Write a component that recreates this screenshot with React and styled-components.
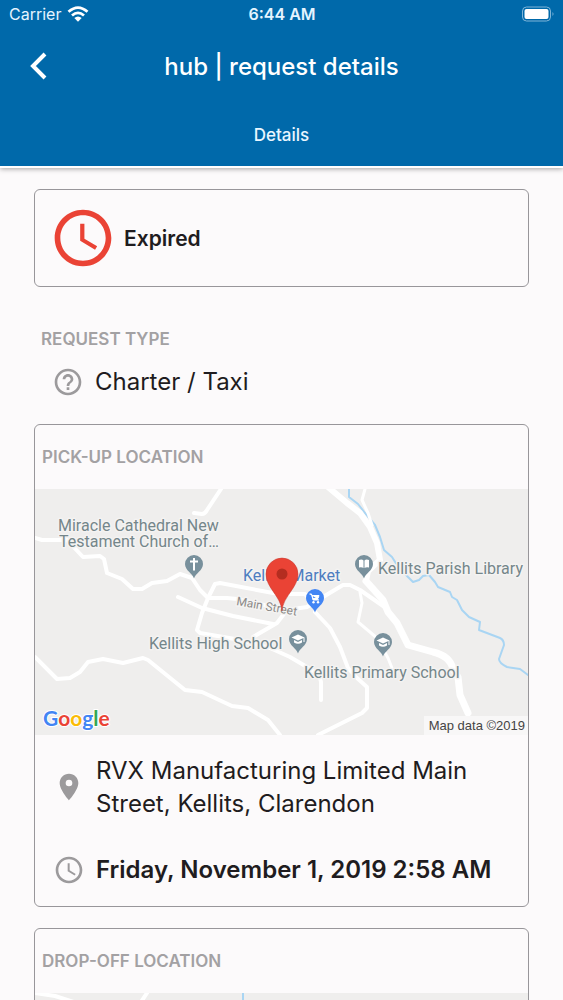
import styled, { createGlobalStyle } from 'styled-components';
import { MdAccessTime, MdHelpOutline, MdLocationOn } from 'react-icons/md';

const GlobalStyle = createGlobalStyle`
  * {
    box-sizing: border-box;
  }

  body {
    margin: 0;
    background: #fcfafb;
    color: #1f1c20;
    font-family: Inter, 'Liberation Sans', sans-serif;
  }
`;

const Screen = styled.div`
  display: flex;
  flex-direction: column;
  height: 100vh;
`;

const Header = styled.header`
  flex: none;
  background: #0069aa;
  color: #fff;
  border-bottom: 2px solid #fff;
  box-shadow: 0 1px 5px rgba(0, 0, 0, 0.35);
  z-index: 1;
`;

const StatusBar = styled.div`
  display: grid;
  grid-template-columns: 1fr auto 1fr;
  align-items: center;
  height: 28px;
  padding: 0 8px 0 9px;
  font-size: 16px;
  color: #e4f4ff;
`;

const Carrier = styled.span`
  display: flex;
  align-items: center;
  gap: 6px;
`;

const Time = styled.time`
  font-weight: 600;
`;

const Battery = styled.svg`
  justify-self: end;
`;

const TitleRow = styled.div`
  display: grid;
  grid-template-columns: 48px 1fr 48px;
  align-items: center;
  height: 76px;
  padding: 0 15px;
`;

const BackButton = styled.button`
  display: flex;
  align-items: center;
  justify-content: center;
  height: 48px;
  padding: 0;
  border: none;
  background: none;
  color: #fff;
  cursor: pointer;
`;

const Title = styled.h1`
  margin: 0;
  text-align: center;
  font-size: 24px;
  font-weight: 500;
`;

const Tabs = styled.nav`
  display: flex;
  height: 62px;
`;

const Tab = styled.button`
  flex: 1;
  border: none;
  background: none;
  color: #e9f6ff;
  font: inherit;
  font-size: 17px;
  font-weight: 500;
  cursor: pointer;
`;

const Content = styled.main`
  flex: 1;
  min-height: 0;
  padding: 21px 34px;
  overflow-y: auto;
  scrollbar-width: none;
`;

const Card = styled.section`
  margin-bottom: 21px;
  border: 1px solid #98969a;
  border-radius: 6px;
  overflow: hidden;
`;

const Status = styled(Card)`
  display: flex;
  align-items: center;
  gap: 7px;
  height: 98px;
  margin: 0;
  padding: 0 14px;
  font-size: 21px;
  font-weight: 600;

  svg {
    color: #ea4335;
  }
`;

const RequestType = styled.section`
  padding: 42px 7px 26px;
`;

const Label = styled.h2`
  margin: 0;
  padding: ${(props) => (props.$inCard ? '22px 7px' : '0 0 16px')};
  line-height: 20px;
  font-size: 17px;
  font-weight: 600;
  color: #a3a1a3;
`;

const Row = styled.div`
  display: flex;
  align-items: center;
  gap: 11px;
  padding: ${(props) => (props.$inCard ? '0 18px' : '0 11px')};
  line-height: 33px;
  font-size: 24px;
  font-weight: ${(props) => (props.$bold ? 600 : 400)};

  svg {
    flex: none;
    color: #9c9a9c;
  }
`;

const Details = styled.div`
  display: flex;
  flex-direction: column;
  gap: 33px;
  padding: 19px 0 20px;
`;

const MapImage = styled.svg`
  display: block;
  width: 100%;
  background: #efeeed;
  font-family: Roboto, sans-serif;
`;

const Road = styled.path`
  fill: none;
  stroke: #fff;
  stroke-width: ${(props) => props.$w || 4};
  stroke-linejoin: round;
  stroke-linecap: round;
`;

const River = styled(Road)`
  stroke: #a9d5f3;
  stroke-width: 2;
`;

const Place = styled.text`
  font-size: ${(props) => props.$size || 16}px;
  fill: ${(props) => props.$color || '#74868a'};
  stroke: #f4f3f2;
  stroke-width: 3;
  stroke-linejoin: round;
  paint-order: stroke;
`;

const Logo = styled.text`
  font-family: Lato, sans-serif;
  font-size: 21px;
  font-weight: 700;
  stroke: #fff;
  stroke-width: 2;
  paint-order: stroke;
`;

const Attribution = styled.text`
  font-family: 'Liberation Sans', sans-serif;
  font-size: 13px;
  fill: #444;
`;

const logoLetters = [
  ['G', '#4285f4'],
  ['o', '#ea4335'],
  ['o', '#fbbc05'],
  ['g', '#4285f4'],
  ['l', '#34a853'],
  ['e', '#ea4335'],
];

// x, y is the centre of the pin's head
function Pin({ x, y, color = '#78909c', children }) {
  return (
    <g transform={`translate(${x} ${y})`}>
      <path d="M0 14.500C-1.200 9.500-9 6.500-9 0A9 9 0 1 1 9 0C9 6.500 1.200 9.500 0 14.500Z" fill={color} />
      {children}
    </g>
  );
}

function School({ x, y }) {
  return (
    <Pin x={x} y={y}>
      <path d="M-6.500-1.500 0-4.500 6.500-1.500V3H5.500V-1L0 1.500ZM-4 1 0 3 4 1V3.500Q0 6-4 3.500Z" fill="#fff" />
    </Pin>
  );
}

function PickupMap() {
  return (
    <MapImage viewBox="0 0 493 246" role="img" aria-label="Map of Kellits">
      <River d="M314 0V8L323 15 330 24 340 36 345 48 349 61 357 68 362 76 373 88 378 93 384 91 388 87 394 86 400 93 403 98 415 103 417 108 422 111 427 121 434 128 445 133 444 141 465 149Q469 151 469 156L464 170Q464 174 472 178L485 180 493 186" />
      <Road d="M186 0 172 21Q170 25 167 25L159 24" />
      <Road d="M0 49 7 51H32L48 68 65 67 69 70 72 84 87 90 98 100H107L117 94 132 92 145 85 157 89 165 101 173 109" />
      <Road d="M173 109H192L202 110 252 121 272 118 288 108 308 96H315L325 101 351 119" />
      <Road d="M173 109 180 95 185 94 238 104 245 105H270L275 111" />
      <Road d="M173 109 167 124 162 141 165 144 200 150 235 159 255 168 272 178Q286 186 286 193V211" />
      <Road d="M143 108 167 119 198 127 238 135M252 121 242 134 218 148" />
      <Road d="M280 123 295 139 305 158 313 179 322 189 332 198V219L327 224 283 246" />
      <Road $w={3} d="M325 103 327 114 323 133 342 149 353 169 357 179" />
      <Road d="M0 168 22 190 35 189 45 183 53 173 68 170 88 174 108 169 113 171 150 201 167 203 197 217 213 219 233 231 245 246" />
      <Road $w={3} d="M330 0 327 11 333 24 337 36" />
      <Road $w={6} d="M293-2 312 14 325 24 335 38 342 54 345 71 333 82 331 92" />
      <Road $w={7} d="M331 92 348 111 353 123 362 134 373 156 398 163Q415 167 418 180L423 188 425 206 433 224" />

      <Place x="23" y="42">Miracle Cathedral New</Place>
      <Place x="24" y="58">Testament Church of…</Place>
      <Place x="208" y="92" $color="#4d7dc0">Kellits Market</Place>
      <Place x="343" y="85">Kellits Parish Library</Place>
      <Place x="114" y="160">Kellits High School</Place>
      <Place x="269" y="189">Kellits Primary School</Place>
      <Place $size={12} $color="#8b8987" transform="translate(201 116) rotate(10)">Main Street</Place>

      <Pin x={159} y={75}>
        <path d="M0-6V6.500M-4-2.500H4" stroke="#fff" strokeWidth="2" />
      </Pin>
      <Pin x={329} y={75}>
        <path d="M-5-4Q-2-5-.5-3.500V4Q-2 3-5 3.500ZM5-4Q2-5 .5-3.500V4Q2 3 5 3.500Z" fill="#fff" />
      </Pin>
      <Pin x={280} y={109} color="#4285f4">
        <path d="M-5.500-4H-3.500L-2 2H4M-3-2.500H4L3 .5H-2Z" fill="#fff" stroke="#fff" strokeWidth="1" />
        <circle cx="-1.500" cy="4.200" r="1.200" fill="#fff" />
        <circle cx="3" cy="4.200" r="1.200" fill="#fff" />
      </Pin>
      <School x={263} y={150} />
      <School x={348} y={153} />

      <path
        d="M247 122C246 107 231 99 231 85A16 16 0 1 1 263 85C263 99 248 107 247 122Z"
        fill="#ea4335"
        stroke="#c5372c"
        strokeWidth="0.500"
      />
      <circle cx="247" cy="85" r="5.500" fill="#b42d20" />

      <Logo x="8" y="237">
        {logoLetters.map(([letter, color], i) => (
          <tspan key={i} fill={color}>{letter}</tspan>
        ))}
      </Logo>
      <rect x="389" y="227" width="104" height="19" fill="#f8f7f7" />
      <Attribution x="490" y="241" textAnchor="end">Map data ©2019</Attribution>
    </MapImage>
  );
}

function DropoffMap() {
  return (
    <MapImage viewBox="0 0 493 246" role="img" aria-label="Map of the drop-off location">
      <Road d="M0 0 20 3 45 11 80 30M112 0 104 12 90 40" />
      <River d="M208 0V40" />
    </MapImage>
  );
}

function App() {
  return (
    <Screen>
      <GlobalStyle />
      <Header>
        <StatusBar>
          <Carrier>
            Carrier
            <svg width="22" height="16" viewBox="0 0 22 16" fill="none" stroke="#fff" strokeWidth="2.800">
              <path d="M1.500 5.800Q11-2.600 20.500 5.800M5 9.500Q11 4.200 17 9.500" />
              <path d="M7.300 12Q11 8.800 14.700 12L11 15.800Z" fill="#fff" stroke="none" />
            </svg>
          </Carrier>
          <Time>6:44 AM</Time>
          <Battery width="33" height="16" viewBox="0 0 33 16">
            <rect x="0.500" y="1" width="28" height="14" rx="4" fill="none" stroke="#7fb5d8" />
            <rect x="2.500" y="3" width="24" height="10" rx="2" fill="#fff" />
            <path d="M30.500 6Q32.500 8 30.500 10Z" fill="#7fb5d8" />
          </Battery>
        </StatusBar>
        <TitleRow>
          <BackButton aria-label="Back">
            <svg width="20" height="28" viewBox="0 0 20 28" fill="none" stroke="currentColor" strokeWidth="4">
              <path d="M16 2 4 14 16 26" />
            </svg>
          </BackButton>
          <Title>hub | request details</Title>
        </TitleRow>
        <Tabs>
          <Tab>Details</Tab>
        </Tabs>
      </Header>

      <Content>
        <Status>
          <MdAccessTime size={68} />
          Expired
        </Status>

        <RequestType>
          <Label>REQUEST TYPE</Label>
          <Row>
            <MdHelpOutline size={32} />
            Charter / Taxi
          </Row>
        </RequestType>

        <Card>
          <Label $inCard>PICK-UP LOCATION</Label>
          <PickupMap />
          <Details>
            <Row $inCard>
              <MdLocationOn size={32} />
              RVX Manufacturing Limited Main Street, Kellits, Clarendon
            </Row>
            <Row $inCard $bold>
              <MdAccessTime size={32} />
              Friday, November 1, 2019 2:58 AM
            </Row>
          </Details>
        </Card>

        <Card>
          <Label $inCard>DROP-OFF LOCATION</Label>
          <DropoffMap />
        </Card>
      </Content>
    </Screen>
  );
}

export default App;
